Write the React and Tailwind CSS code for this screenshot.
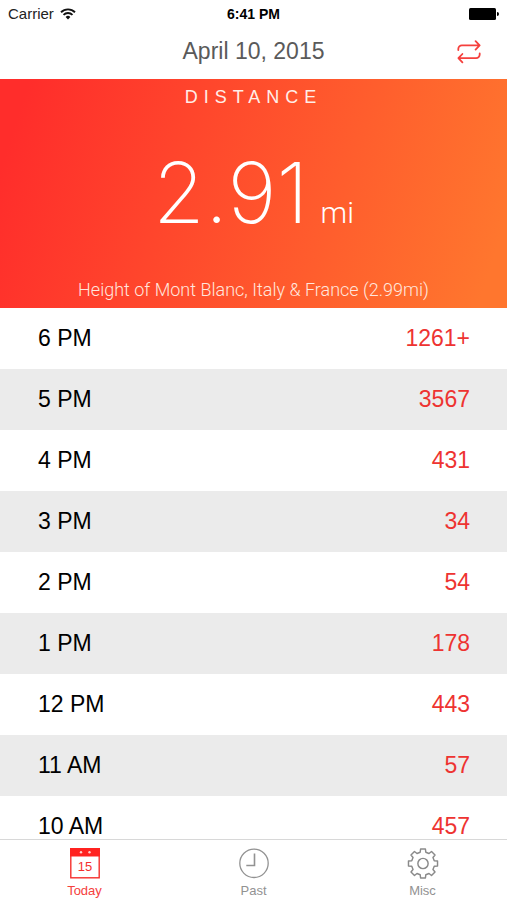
const hours = [
  { label: '6 PM', steps: '1261+' },
  { label: '5 PM', steps: '3567' },
  { label: '4 PM', steps: '431' },
  { label: '3 PM', steps: '34' },
  { label: '2 PM', steps: '54' },
  { label: '1 PM', steps: '178' },
  { label: '12 PM', steps: '443' },
  { label: '11 AM', steps: '57' },
  { label: '10 AM', steps: '457' },
]

const tabClass = 'flex flex-1 flex-col items-center gap-1 pt-2 text-[13px] leading-4'

const WifiIcon = () => (
  <svg width="16" height="12" viewBox="0 0 16 12" fill="none" stroke="#111" strokeWidth="1.9" aria-hidden="true">
    <path d="M1 4.2a10 10 0 0 1 14 0" />
    <path d="M3.5 6.9a6.4 6.4 0 0 1 9 0" />
    <path d="M8 11.4 5.6 8.9a3.4 3.4 0 0 1 4.8 0Z" fill="#111" stroke="none" />
  </svg>
)

const BatteryIcon = () => (
  <svg width="30" height="12" viewBox="0 0 30 12" aria-hidden="true">
    <rect width="27" height="12" rx="1.5" />
    <path d="M28 4a2 2 0 0 1 0 4Z" />
  </svg>
)

const RepeatIcon = () => (
  <svg
    width="24"
    height="24"
    viewBox="0 0 24 24"
    fill="none"
    stroke="#f5403d"
    strokeWidth="1.8"
    strokeLinecap="round"
    strokeLinejoin="round"
    aria-hidden="true"
  >
    <path d="M1.3 10V9a3.6 3.6 0 0 1 3.6-3.6h17.4M18.600 1.200l4 4.200-4 4.200" />
    <path d="M22.700 13.400v1.200a3.600 3.600 0 0 1-3.600 3.600H1.700M5.400 14l-4 4.200 4 4.200" />
  </svg>
)

const CalendarIcon = () => (
  <svg width="30" height="31" viewBox="0 0 30 31" className="shrink-0" aria-hidden="true">
    <rect x="0.8" y="0.8" width="28.4" height="29" fill="#fff" stroke="#f5302d" strokeWidth="1.4" />
    <path d="M0 0h30v8.5H0Z" fill="#ff2320" />
    <circle cx="11" cy="4.3" r="1.2" fill="#ffd0cc" />
    <circle cx="19.5" cy="4.3" r="1.2" fill="#ffd0cc" />
    <text x="15" y="22.5" textAnchor="middle" fontSize="13" fill="#f5302d">
      15
    </text>
  </svg>
)

const ClockIcon = () => (
  <svg
    width="30"
    height="31"
    viewBox="0 0 30 31"
    fill="none"
    stroke="#929292"
    strokeWidth="1.3"
    className="shrink-0"
    aria-hidden="true"
  >
    <circle cx="15" cy="15.3" r="14.2" />
    <path d="M15.5 5.5v12H7.3" strokeWidth="1.6" />
  </svg>
)

const GearIcon = () => (
  <svg
    width="32"
    height="31"
    viewBox="0 0 32 32"
    fill="none"
    stroke="#8a8a8a"
    strokeWidth="1.5"
    strokeLinejoin="round"
    className="shrink-0"
    aria-hidden="true"
  >
    <path d="M13.1 4.4 13.5 1h5l.4 3.4 3.3 1.3 2.6-2.1 3.6 3.6-2.1 2.6 1.3 3.3 3.4.4v5l-3.4.4-1.3 3.3 2.1 2.6-3.6 3.6-2.6-2.1-3.3 1.3-.4 3.4h-5l-.4-3.4-3.3-1.3-2.6 2.1-3.6-3.6 2.1-2.6-1.3-3.3L1 18.5v-5l3.4-.4 1.3-3.3L3.6 7.2l3.6-3.6 2.6 2.1Z" />
    <circle cx="16" cy="16" r="5.3" />
  </svg>
)

const App = () => {
  return (
    <div className="flex h-screen flex-col bg-white font-['Liberation_Sans',Arial,sans-serif] text-black">
      <div className="grid h-7 shrink-0 grid-cols-3 items-center px-2">
        <div className="flex items-center gap-1.5 text-[15px] text-[#222]">
          Carrier
          <WifiIcon />
        </div>
        <span className="text-center text-sm font-bold">6:41 PM</span>
        <div className="flex justify-end">
          <BatteryIcon />
        </div>
      </div>

      <header className="grid h-[51px] shrink-0 grid-cols-[1fr_auto_1fr] items-center px-[26px] pb-1">
        <h1 className="col-start-2 text-[23px] text-[#5a5a5a]">April 10, 2015</h1>
        <button type="button" aria-label="Switch unit" className="justify-self-end">
          <RepeatIcon />
        </button>
      </header>

      <section className="flex h-[229px] shrink-0 flex-col items-center bg-[linear-gradient(108deg,#ff2d2b_5%,#ff762e_95%)] py-1.5 text-white">
        <h2 className="text-lg leading-6 tracking-[6px] text-[#ffeee8]">DISTANCE</h2>
        <p className="mt-[34px] font-['Inter',sans-serif] text-[84px] leading-[100px] font-extralight">
          2.91
          <span className="ml-3 font-['Roboto',sans-serif] text-3xl font-light">mi</span>
        </p>
        <p className="mt-auto font-['Roboto',sans-serif] text-lg leading-6 font-light text-[#ffe6de]">
          Height of Mont Blanc, Italy &amp; France (2.99mi)
        </p>
      </section>

      <main className="min-h-0 flex-1 overflow-hidden">
        <table className="w-full text-[23px]">
          <tbody>
            {hours.map((hour) => (
              <tr key={hour.label} className="h-[61px] even:bg-[#ebebeb]">
                <th scope="row" className="pl-[38px] text-left font-normal">
                  {hour.label}
                </th>
                <td className="pr-[37px] text-right text-[#ee3331]">{hour.steps}</td>
              </tr>
            ))}
          </tbody>
        </table>
      </main>

      <nav className="flex h-[61px] shrink-0 border-t border-[#d8d8d8] bg-white text-[#929292]">
        <button type="button" aria-current="page" className={`${tabClass} text-[#f5403d]`}>
          <CalendarIcon />
          Today
        </button>
        <button type="button" className={tabClass}>
          <ClockIcon />
          Past
        </button>
        <button type="button" className={tabClass}>
          <GearIcon />
          Misc
        </button>
      </nav>
    </div>
  )
}

export default App
